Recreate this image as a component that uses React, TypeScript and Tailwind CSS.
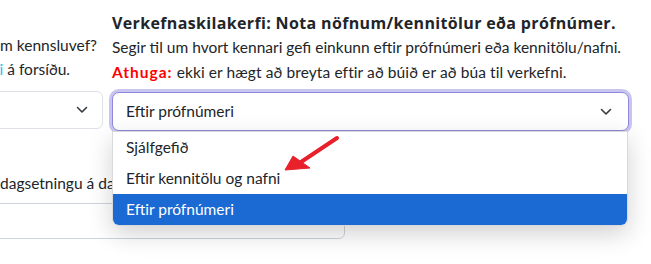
import React from "react";

const FONT = "font-['Lato','Noto_Sans',sans-serif]";

function Chevron() {
  return (
    <svg width="12" height="8" viewBox="0 0 12 8" fill="none" className="shrink-0">
      <path d="M1.5 1.5 L6 6 L10.5 1.5" stroke="#343a40" strokeWidth="1.6" strokeLinecap="round" strokeLinejoin="round" />
    </svg>
  );
}

const OPTIONS = ["Sjálfgefið", "Eftir kennitölu og nafni", "Eftir prófnúmeri"];

export default function App() {
  const selected = 2;
  return (
    <div className={`relative w-[651px] h-[264px] overflow-hidden bg-white text-[#212529] text-[15.5px] ${FONT}`}>
      <div className="flex gap-[9px] pt-[11px]">
        {/* left column, mostly off the page */}
        <div className="ml-[-297px] w-[400px] shrink-0">
          <div className="h-[22px]" />
          <div className="text-right pr-[6px] whitespace-nowrap leading-[24px]">
            Á að birta verkefnið á forsíðu um kennsluvef?
          </div>
          <div className="text-right pr-[33px] whitespace-nowrap leading-[24px]">
            Sýnilegt í <span className="text-[#0dcaf0]">dagatali</span> á forsíðu.
          </div>
          <div className="mt-[10px] h-[38px] rounded-[6px] border border-[#dee2e6] flex items-center justify-end pr-[14px]">
            <Chevron />
          </div>
        </div>

        {/* right column */}
        <div className="w-[517px] shrink-0">
          <div className="font-['Open_Sans',sans-serif] font-bold text-[16px] tracking-[0.35px] leading-[24px] whitespace-nowrap">
            Verkefnaskilakerfi: Nota nöfnum/kennitölur eða prófnúmer.
          </div>
          <div className="leading-[24.5px] whitespace-nowrap">
            Segir til um hvort kennari gefi einkunn eftir prófnúmeri eða kennitölu/nafni.
          </div>
          <div className="leading-[24.5px] whitespace-nowrap tracking-[0.1px]">
            <span className="font-bold text-[#ff0000] tracking-[1px]">Athuga:</span> ekki er hægt að breyta eftir að búið er að búa til verkefni.
          </div>
          <div className="relative mt-[8px]">
            <div className="h-[39px] rounded-[7px] border border-[#8f88dc] ring-[3px] ring-[#c9c5f1] flex items-center justify-between pl-[13px] pr-[16px] bg-white">
              <span>Eftir prófnúmeri</span>
              <Chevron />
            </div>
            <div className="absolute left-0 right-[1px] top-full z-10 rounded-b-[7px] border border-[#d9d9d9] bg-white shadow-[0_8px_24px_rgba(0,0,0,0.18)] overflow-hidden">
              {OPTIONS.map((o, i) => (
                <div
                  key={o}
                  className={`h-[31px] flex items-center pl-[13px] ${i === selected ? "bg-[#1b69d3] text-white" : ""}`}
                >
                  {o}
                </div>
              ))}
            </div>
            <svg
              className="absolute left-[165px] top-[40px] z-20"
              width="70"
              height="45"
              viewBox="0 0 70 45"
              fill="none"
            >
              <path d="M60 6 L24 30" stroke="#e8212b" strokeWidth="4" strokeLinecap="round" />
              <path d="M8 38 L16 24 L33 36 Z" fill="#e8212b" stroke="#e8212b" strokeWidth="1" strokeLinejoin="round" />
            </svg>
          </div>
        </div>
      </div>

      {/* next form row */}
      <div className="mt-[40px] leading-[24px] whitespace-nowrap">dagsetningu á dagatali nemenda</div>
      <div className="ml-[-20px] mt-[8px] w-[365px] h-[36px] rounded-[6px] border border-[#ced4da]" />
    </div>
  );
}
